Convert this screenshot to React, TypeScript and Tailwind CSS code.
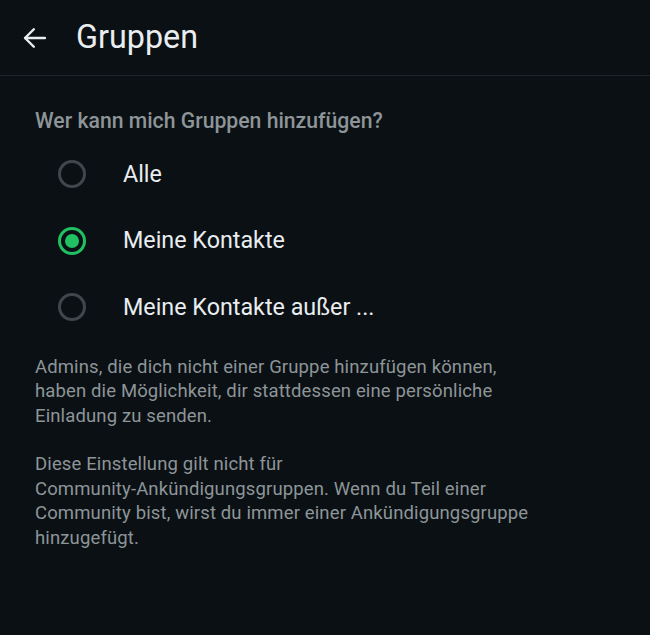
import { useState } from 'react'

const OPTIONS = ['Alle', 'Meine Kontakte', 'Meine Kontakte außer ...']

function Radio({ checked }: { checked: boolean }) {
  return (
    <span
      className={`grid size-[28px] shrink-0 place-items-center rounded-full border-[3px] ${
        checked ? 'border-[#21c063]' : 'border-[#40474c]'
      }`}
    >
      {checked && <span className="size-[14px] rounded-full bg-[#21c063]" />}
    </span>
  )
}

export default function App() {
  const [selected, setSelected] = useState(1)

  return (
    <div className="min-h-[635px] w-full bg-[#0b1014] font-['Roboto',sans-serif] text-[#e9edef]">
      {/* Header */}
      <div className="flex h-[76px] items-center border-b border-[#1e252a] px-[21px]">
        <button className="mr-[27px] text-[#e9edef]">
          <svg width="28" height="28" viewBox="0 0 24 24" fill="none" stroke="currentColor" strokeWidth="2.1" strokeLinecap="round" strokeLinejoin="round">
            <path d="M20.5 12H3.5" />
            <path d="M11 4.5L3.5 12l7.5 7.5" />
          </svg>
        </button>
        <h1 className="text-[32.3px] leading-none">Gruppen</h1>
      </div>

      {/* Body */}
      <div className="px-[35px] pt-[31px]">
        <p className="text-[21.2px] leading-[28px] font-medium text-[#8d9598]">Wer kann mich Gruppen hinzufügen?</p>

        <div className="mt-[6px]">
          {OPTIONS.map((label, i) => (
            <button
              key={label}
              onClick={() => setSelected(i)}
              className="flex h-[66.5px] w-full items-center text-left"
            >
              <span className="ml-[23px] mr-[37px]">
                <Radio checked={selected === i} />
              </span>
              <span className="text-[23.3px] text-[#e9edef]">{label}</span>
            </button>
          ))}
        </div>

        <div className="mt-[14px] space-y-[24px] text-[18.5px] leading-[24.5px] tracking-[0.13px] text-[#8d9598]">
          <p>
            Admins, die dich nicht einer Gruppe hinzufügen können,
            <br />
            haben die Möglichkeit, dir stattdessen eine persönliche
            <br />
            Einladung zu senden.
          </p>
          <p>
            Diese Einstellung gilt nicht für
            <br />
            Community-Ankündigungsgruppen. Wenn du Teil einer
            <br />
            Community bist, wirst du immer einer Ankündigungsgruppe
            <br />
            hinzugefügt.
          </p>
        </div>
      </div>
    </div>
  )
}
